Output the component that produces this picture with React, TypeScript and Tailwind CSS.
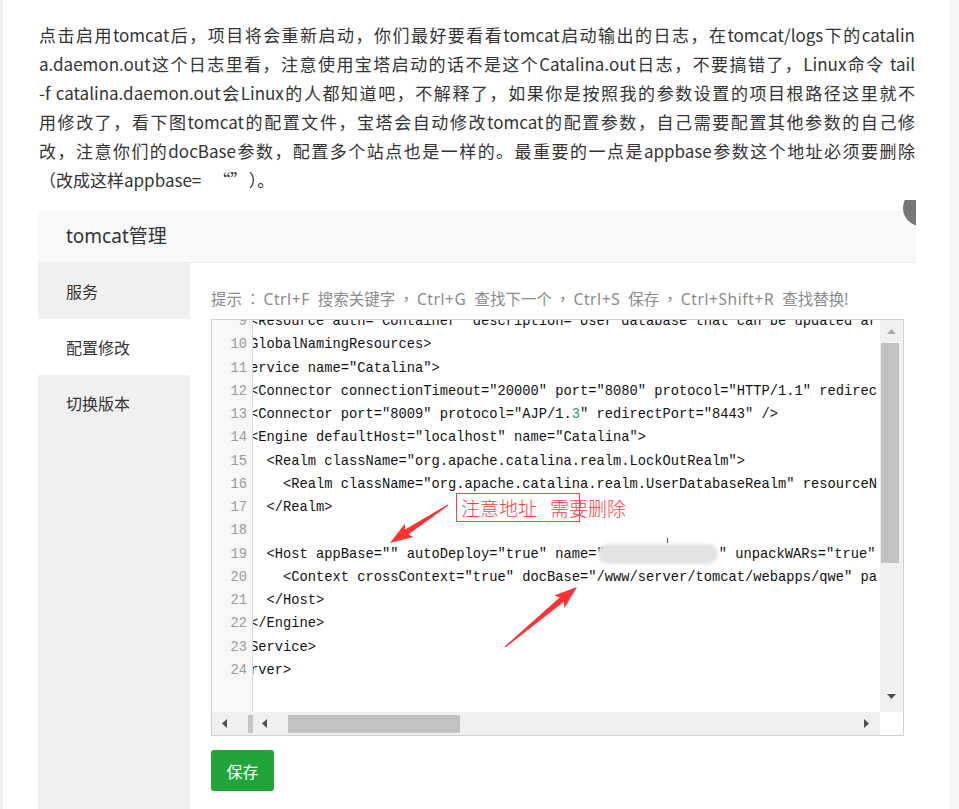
import React from "react";

const paraLines = [
  "点击启用tomcat后，项目将会重新启动，你们最好要看看tomcat启动输出的日志，在tomcat/logs下的catalin",
  "a.daemon.out这个日志里看，注意使用宝塔启动的话不是这个Catalina.out日志，不要搞错了，Linux命令 tail",
  "-f catalina.daemon.out会Linux的人都知道吧，不解释了，如果你是按照我的参数设置的项目根路径这里就不",
  "用修改了，看下图tomcat的配置文件，宝塔会自动修改tomcat的配置参数，自己需要配置其他参数的自己修",
  "改，注意你们的docBase参数，配置多个站点也是一样的。最重要的一点是appbase参数这个地址必须要删除",
];

function arrowPoints(tx: number, ty: number, hx: number, hy: number) {
  const dx = hx - tx;
  const dy = hy - ty;
  const len = Math.hypot(dx, dy);
  const ux = dx / len;
  const uy = dy / len;
  const nx = -uy;
  const ny = ux;
  const headLen = 20;
  const neckX = hx - ux * headLen;
  const neckY = hy - uy * headLen;
  const barbX = hx - ux * (headLen + 3);
  const barbY = hy - uy * (headLen + 3);
  const pts: [number, number][] = [
    [tx + nx * 0.6, ty + ny * 0.6],
    [neckX + nx * 3, neckY + ny * 3],
    [barbX + nx * 8, barbY + ny * 8],
    [hx, hy],
    [barbX - nx * 8, barbY - ny * 8],
    [neckX - nx * 3, neckY - ny * 3],
    [tx - nx * 0.6, ty - ny * 0.6],
  ];
  return pts.map((p) => p.map((v) => v.toFixed(1)).join(",")).join(" ");
}

function Tri({ dir, color }: { dir: "up" | "down" | "left" | "right"; color: string }) {
  const pts =
    dir === "up"
      ? "0,5 4.5,0 9,5"
      : dir === "down"
      ? "0,0 9,0 4.5,5"
      : dir === "left"
      ? "5,0 5,9 0,4.5"
      : "0,0 0,9 5,4.5";
  const w = dir === "up" || dir === "down" ? 9 : 5;
  const h = dir === "up" || dir === "down" ? 5 : 9;
  return (
    <svg width={w} height={h} viewBox={`0 0 ${w} ${h}`}>
      <polygon points={pts} fill={color} />
    </svg>
  );
}

function P({ c }: { c: string }) {
  return (
    <span className="mx-[3px]" style={{ fontFamily: '"Noto Sans CJK TC", sans-serif' }}>
      {c}
    </span>
  );
}

function L({ t }: { t: string }) {
  return <span className="tracking-[0.6px]">{t}</span>;
}

export default function App() {
  const mono = { fontFamily: '"Liberation Mono", "DejaVu Sans Mono", monospace' };
  const latinFirst = { fontFamily: '"Noto Sans", "Noto Sans CJK SC", sans-serif' };
  return (
    <div
      className="w-[959px] h-[809px] overflow-hidden flex bg-white text-[#333]"
      style={{ fontFamily: '"Noto Sans CJK SC", "Noto Sans", sans-serif' }}
    >
      <div className="w-[3px] bg-[#f2f2f2]" />
      <div className="flex-1 pl-[36px] pt-[20px] flex flex-col">
        <div className="w-[876px] text-[17px] leading-[29px] text-[#333]">
          {paraLines.map((l, i) => (
            <div key={i} className="text-justify [text-align-last:justify] whitespace-nowrap">
              {l}
            </div>
          ))}
          <div className="whitespace-nowrap">
            （改成这样appbase=<span className="ml-[12px]">“”</span>
            <span className="ml-[10px]">）。</span>
          </div>
        </div>

        {/* embedded screenshot */}
        <div className="relative mt-[6px] ml-[-1px] w-[878px] flex-1 overflow-hidden flex flex-col">
          <div className="absolute left-[865px] top-[-10px] w-[36px] h-[36px] rounded-full bg-[#777]" />
          <div className="h-[11px] shrink-0" />
          <div
            className="h-[52px] shrink-0 bg-[#f8f8f8] border-b border-[#ececec] flex items-center pl-[28px] text-[19px] text-[#333]"
            style={latinFirst}
          >
            tomcat管理
          </div>
          <div className="flex flex-1">
            <div className="w-[152px] bg-[#f0f0f0] flex flex-col text-[16px] text-[#333]">
              <div className="h-[56px] flex items-center pl-[28px]">服务</div>
              <div className="h-[56px] flex items-center pl-[28px] bg-white">配置修改</div>
              <div className="h-[56px] flex items-center pl-[28px]">切换版本</div>
            </div>
            <div className="flex-1 bg-white pl-[21px] pt-[25px]">
              <div
                className="h-[20px] flex items-center text-[15.5px] leading-[20px] text-[#8a8a8a] whitespace-pre [word-spacing:4px]"
                style={latinFirst}
              >
                <span>
                  提示<P c="：" />
                  <L t="Ctrl+F" /> 搜索关键字<P c="，" />
                  <L t="Ctrl+G" /> 查找下一个<P c="，" />
                  <L t="Ctrl+S" /> 保存<P c="，" />
                  <L t="Ctrl+Shift+R" /> 查找替换!
                </span>
              </div>
              {/* editor */}
              <div className="mt-[11px] w-[693px] h-[417px] border border-[#cfcfcf] flex flex-col">
                <div className="flex h-[392px]">
                  <div
                    className="w-[41px] bg-[#f7f7f7] border-r border-[#dcdcdc] overflow-hidden text-right pr-[5px] text-[#9a9a9a] text-[13.75px] leading-[23.25px]"
                    style={mono}
                  >
                    <div className="mt-[-10px]">
                      {Array.from({ length: 16 }, (_, i) => (
                        <div key={i}>{i + 9}</div>
                      ))}
                    </div>
                  </div>
                  <div className="relative flex-1 overflow-hidden">
                    <div
                      className="mt-[-10px] ml-[-3px] text-[13.75px] leading-[23.25px] text-[#111] whitespace-pre"
                      style={mono}
                    >
                      <div>{'<Resource auth="Container" description="User database that can be updated ar'}</div>
                      <div>{"GlobalNamingResources>"}</div>
                      <div>{'ervice name="Catalina">'}</div>
                      <div>{'<Connector connectionTimeout="20000" port="8080" protocol="HTTP/1.1" redirec'}</div>
                      <div>
                        {'<Connector port="8009" protocol="AJP/1.'}
                        <span className="text-[#2f8f86]">3</span>
                        {'" redirectPort="8443" />'}
                      </div>
                      <div>{'<Engine defaultHost="localhost" name="Catalina">'}</div>
                      <div>{'  <Realm className="org.apache.catalina.realm.LockOutRealm">'}</div>
                      <div>{'    <Realm className="org.apache.catalina.realm.UserDatabaseRealm" resourceN'}</div>
                      <div>{"  </Realm>"}</div>
                      <div>{" "}</div>
                      <div>
                        {'  <Host appBase="" autoDeploy="true" name="'}
                        <span className="relative inline-block w-[114px] h-[1em] align-middle">
                          <span className="absolute left-[-7px] top-[-3px] w-[120px] h-[20px] rounded-full bg-[#e3e3e3] blur-[1.5px]" />
                          <span className="absolute left-[62px] top-[-9px] w-[1px] h-[5px] bg-[#555]" />
                        </span>
                        {'" unpackWARs="true"'}
                      </div>
                      <div>{'    <Context crossContext="true" docBase="/www/server/tomcat/webapps/qwe" pa'}</div>
                      <div>{"  </Host>"}</div>
                      <div>{"</Engine>"}</div>
                      <div>{"Service>"}</div>
                      <div>{"rver>"}</div>
                    </div>

                    {/* annotation */}
                    <div className="absolute left-[203px] top-[173px] w-[124px] h-[29px] border border-[#f04848]" />
                    <div className="absolute left-[208px] top-[174px] h-[28px] flex items-center text-[19px] text-[#ff3d3d] font-light whitespace-nowrap">
                      <span>注意地址</span>
                      <span className="ml-[13px]">需要删除</span>
                    </div>
                    <svg className="absolute left-0 top-0" width="627" height="392">
                      <polygon points={arrowPoints(195, 185, 137, 223)} fill="#ff3333" />
                      <polygon points={arrowPoints(252, 327, 324, 267)} fill="#ff3333" />
                    </svg>
                  </div>
                  {/* vertical scrollbar */}
                  <div className="w-[23px] bg-[#f0f0f0] flex flex-col">
                    <div className="h-[23px] flex items-center justify-center">
                      <Tri dir="up" color="#a8a8a8" />
                    </div>
                    <div className="h-[220px] w-[18px] ml-[1px] bg-[#c1c1c1]" />
                    <div className="flex-1" />
                    <div className="h-[28px] flex items-center justify-center pb-[4px]">
                      <Tri dir="down" color="#505050" />
                    </div>
                  </div>
                </div>
                {/* horizontal scrollbar */}
                <div className="flex h-[23px]">
                  <div className="w-[36px] bg-[#f0f0f0] flex items-center pl-[10px]">
                    <Tri dir="left" color="#505050" />
                  </div>
                  <div className="w-[5px] bg-[#f0f0f0] flex items-center">
                    <div className="w-[5px] h-[18px] bg-[#c4c4c4]" />
                  </div>
                  <div className="flex-1 bg-[#f0f0f0] flex items-center">
                    <div className="w-[12px] ml-[9px]">
                      <Tri dir="left" color="#505050" />
                    </div>
                    <div className="ml-[14px] w-[172px] h-[18px] bg-[#c1c1c1]" />
                    <div className="flex-1" />
                    <div className="mr-[11px]">
                      <Tri dir="right" color="#505050" />
                    </div>
                  </div>
                  <div className="w-[23px] bg-white" />
                </div>
              </div>
              <button className="mt-[14px] w-[63px] h-[41px] rounded-[3px] bg-[#20a53a] text-white text-[16px] flex items-center justify-center">
                保存
              </button>
            </div>
          </div>
        </div>
      </div>
      <div className="w-[10px] bg-[#f5f5f5]" />
    </div>
  );
}
